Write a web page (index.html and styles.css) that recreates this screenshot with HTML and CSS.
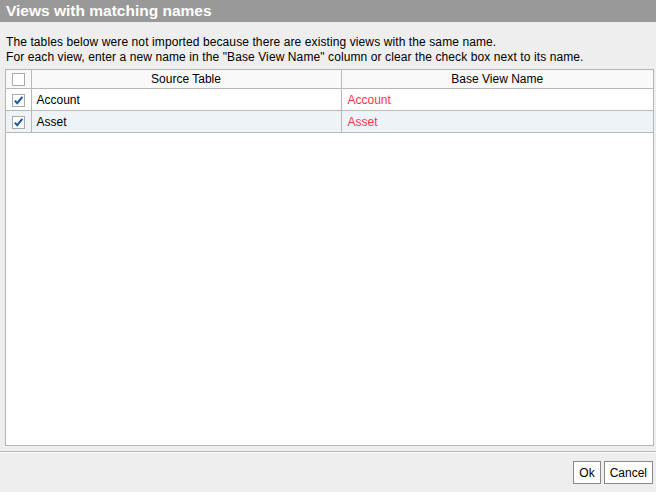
FILE: index.html
```html
<!DOCTYPE html>
<html>
<head>
<meta charset="utf-8">
<link rel="stylesheet" href="styles.css">
</head>
<body>
<div class="dialog">
  <div class="titlebar">Views with matching names</div>
  <div class="content">
    <p class="msg">The tables below were not imported because there are existing views with the same name.<br>For each view, enter a new name in the "Base View Name" column or clear the check box next to its name.</p>
    <div class="grid">
      <table class="tbl">
        <colgroup><col class="c-check"><col class="c-src"><col class="c-base"></colgroup>
        <thead>
          <tr class="head">
            <th class="cell-check"><span class="cb"></span></th>
            <th>Source Table</th>
            <th>Base View Name</th>
          </tr>
        </thead>
        <tbody>
          <tr class="row">
            <td class="cell-check"><span class="cb"><svg viewBox="0 0 11 11" width="11" height="11"><path d="M1.8 5.6 L4.2 8.2 L9.4 1.8" fill="none" stroke="#1c5a9e" stroke-width="2"/></svg></span></td>
            <td>Account</td>
            <td class="red">Account</td>
          </tr>
          <tr class="row alt">
            <td class="cell-check"><span class="cb"><svg viewBox="0 0 11 11" width="11" height="11"><path d="M1.8 5.6 L4.2 8.2 L9.4 1.8" fill="none" stroke="#1c5a9e" stroke-width="2"/></svg></span></td>
            <td>Asset</td>
            <td class="red">Asset</td>
          </tr>
        </tbody>
      </table>
    </div>
  </div>
  <div class="footer">
    <button class="btn">Ok</button>
    <button class="btn">Cancel</button>
  </div>
</div>
</body>
</html>
```
FILE: styles.css
```css
html, body {
  margin: 0;
  padding: 0;
  background: #eeeeee;
}
body {
  font-family: "Liberation Sans", Arial, sans-serif;
  font-size: 12px;
  color: #000;
}
.dialog {
  width: 656px;
  height: 492px;
  display: flex;
  flex-direction: column;
  background: #eeeeee;
}
.titlebar {
  height: 22px;
  line-height: 22px;
  background: #999999;
  color: #ffffff;
  font-weight: bold;
  font-size: 15.5px;
  padding-left: 6px;
}
.content {
  padding: 13px 2px 0 5px;
}
.msg {
  margin: 0 0 4px 1px;
  line-height: 15px;
  letter-spacing: 0.1px;
}
.grid {
  height: 377px;
  box-sizing: border-box;
  border: 1px solid #b4b4b4;
  background: #ffffff;
}
.tbl {
  width: 100%;
  border-collapse: collapse;
  table-layout: fixed;
}
.c-check { width: 25px; }
.c-src { width: 310px; }
.tbl th, .tbl td {
  padding: 0;
  border-bottom: 1px solid #b8b8b8;
  border-left: 1px solid #b8b8b8;
  white-space: nowrap;
}
.tbl th:first-child, .tbl td:first-child {
  border-left: none;
}
.head th {
  height: 18px;
  background: #f9f9f9;
  font-weight: normal;
  text-align: center;
}
.row td {
  height: 21px;
  padding-left: 5px;
}
.row td.red {
  padding-left: 6px;
}
.row td.cell-check {
  padding-left: 0;
}
.row.alt td {
  background: #eef3f8;
}
.cell-check {
  text-align: center;
}
.cb {
  display: inline-flex;
  align-items: center;
  justify-content: center;
  width: 11px;
  height: 11px;
  border: 1px solid #a9a9a9;
  background: #ffffff;
  vertical-align: middle;
}
.cb svg { display: block; }
.red {
  color: #f5364f;
}
.footer {
  margin-top: auto;
  height: 41px;
  box-sizing: border-box;
  border-top: 1px solid #b4b4b4;
  box-shadow: inset 0 1px 0 #ffffff;
  display: flex;
  justify-content: flex-end;
  align-items: flex-start;
  gap: 3px;
  padding: 9px 3px 0 0;
}
.btn {
  font-family: "Liberation Sans", Arial, sans-serif;
  font-size: 12px;
  color: #000;
  background: #ffffff;
  border: 1px solid #888888;
  border-radius: 0;
  height: 23px;
  padding: 0 5px;
  margin: 0;
}
```
